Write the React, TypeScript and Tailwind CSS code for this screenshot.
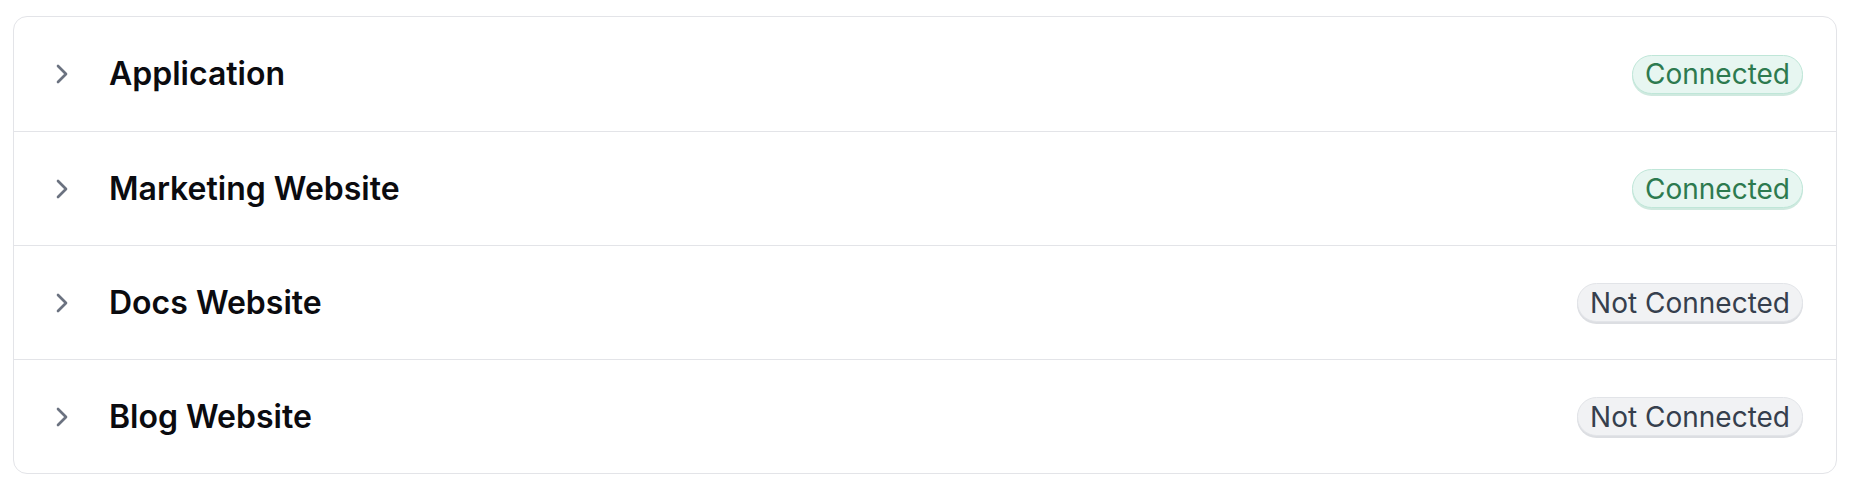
import { ChevronRight } from 'lucide-react'

const sites = [
  { name: 'Application', connected: true },
  { name: 'Marketing Website', connected: true },
  { name: 'Docs Website', connected: false },
  { name: 'Blog Website', connected: false },
]

function StatusBadge({ connected }: { connected: boolean }) {
  if (connected) {
    return (
      <span className="inline-flex h-[39px] items-center rounded-full border border-[#bfe6d8] bg-[#e7f6f1] px-[12px] text-[28px] leading-none text-[#2d7a4f] shadow-[0_2px_0_#cfe9df]">
        Connected
      </span>
    )
  }
  return (
    <span className="inline-flex h-[39px] items-center rounded-full border border-[#e2e4e8] bg-[#f1f2f4] px-[12px] text-[28px] leading-none text-[#363f4d] shadow-[0_2px_0_#dcdee2]">
      Not Connected
    </span>
  )
}

export default function App() {
  return (
    <div className="min-h-screen bg-white px-[13px] pt-[16px]" style={{ fontFamily: 'Inter, "Noto Sans", sans-serif' }}>
      <div className="overflow-hidden rounded-[14px] border border-[#e3e4e8] bg-white">
        {sites.map((site, i) => (
          <div
            key={site.name}
            className={`flex h-[114px] items-center pl-[32px] pr-[33px] ${i > 0 ? 'border-t border-[#e3e4e8]' : ''}`}
          >
            <ChevronRight className="h-[32px] w-[32px] text-[#6b7280]" strokeWidth={2} />
            <span className="ml-[31px] text-[32px] font-semibold text-[#0b0b0f]">{site.name}</span>
            <span className="ml-auto">
              <StatusBadge connected={site.connected} />
            </span>
          </div>
        ))}
      </div>
    </div>
  )
}
